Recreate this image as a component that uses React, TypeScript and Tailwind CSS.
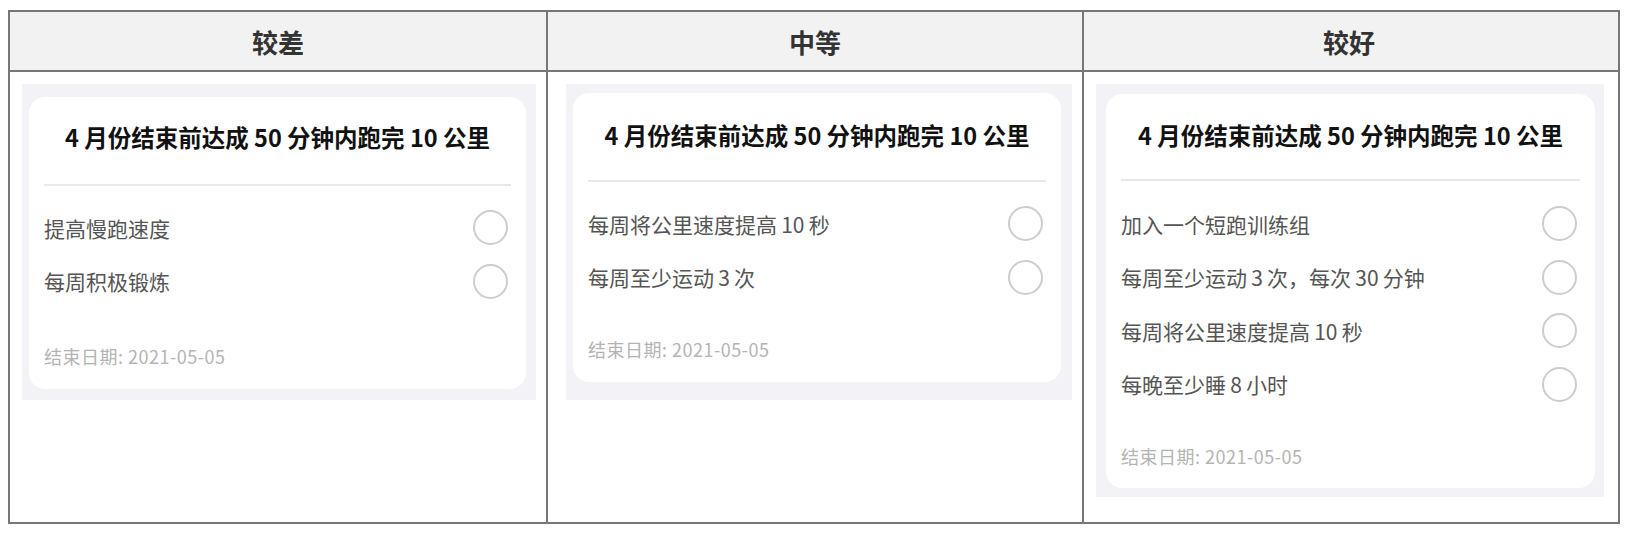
import React from "react";

type Col = {
  header: string;
  items: string[];
  cellPl: string;
  panelW: string;
  panelPad: string;
  cardW: string;
  titleBlock: string;
  afterDivider: string;
  dateGap: string;
  cardPb: string;
};

const FONT = { fontFamily: '"Noto Sans CJK SC", "Noto Sans", sans-serif' };

const TITLE = "4 月份结束前达成 50 分钟内跑完 10 公里";

const cols: Col[] = [
  {
    header: "较差",
    items: ["提高慢跑速度", "每周积极锻炼"],
    cellPl: "pl-[12px]",
    panelW: "w-[514px]",
    panelPad: "pt-[13px] pl-[7px] pr-[10px] pb-[11px]",
    cardW: "w-[497px]",
    titleBlock: "pt-[24px] pb-[31px]",
    afterDivider: "pt-[15px]",
    dateGap: "pt-[36px]",
    cardPb: "pb-[21px]",
  },
  {
    header: "中等",
    items: ["每周将公里速度提高\u200910\u2009秒", "每周至少运动\u20093\u2009次"],
    cellPl: "pl-[18px]",
    panelW: "w-[506px]",
    panelPad: "pt-[9px] pl-[7px] pr-[11px] pb-[18px]",
    cardW: "w-[488px]",
    titleBlock: "pt-[26px] pb-[29px]",
    afterDivider: "pt-[15px]",
    dateGap: "pt-[33px]",
    cardPb: "pb-[21px]",
  },
  {
    header: "较好",
    items: [
      "加入一个短跑训练组",
      "每周至少运动\u20093\u2009次，每次\u200930\u2009分钟",
      "每周将公里速度提高\u200910\u2009秒",
      "每晚至少睡\u20098\u2009小时",
    ],
    cellPl: "pl-[12px]",
    panelW: "w-[508px]",
    panelPad: "pt-[10px] pl-[10px] pr-[9px] pb-[9px]",
    cardW: "w-[489px]",
    titleBlock: "pt-[25px] pb-[28px]",
    afterDivider: "pt-[16px]",
    dateGap: "pt-[33px]",
    cardPb: "pb-[20px]",
  },
];

function Card({ c }: { c: Col }) {
  return (
    <div className={`${c.panelW} ${c.panelPad} bg-[#f2f2f7]`}>
      <div className={`${c.cardW} ${c.cardPb} bg-white rounded-[16px] px-[15px]`}>
        <div className={`${c.titleBlock} text-center`}>
          <div className="text-[23.5px] leading-[32px] font-bold text-[#111] whitespace-nowrap">
            {TITLE}
          </div>
        </div>
        <div className="h-[2px] bg-[#e8e8e8]" />
        <div className={c.afterDivider}>
          {c.items.map((it) => (
            <div key={it} className="h-[53.5px] flex items-center justify-between pr-[3px]">
              <span className="text-[21px] leading-[28px] text-[#555] whitespace-nowrap">{it}</span>
              <div className="w-[35px] h-[35px] rounded-full border-2 border-[#cdcdcd]" />
            </div>
          ))}
        </div>
        <div className={c.dateGap}>
          <div className="text-[18px] leading-[24px] tracking-[0.5px] text-[#b4b4b4]">
            结束日期: 2021-05-05
          </div>
        </div>
      </div>
    </div>
  );
}

export default function App() {
  return (
    <div className="w-[1630px] h-[536px] bg-white pt-[10px] pl-[8px]" style={FONT}>
      <div className="w-[1612px] h-[514px] border-2 border-[#777] flex flex-col">
        <div className="flex h-[60px] bg-[#f2f2f2] border-b-2 border-[#777]">
          {cols.map((c, i) => (
            <div
              key={c.header}
              className={`${i === 2 ? "w-[532px]" : "w-[536px]"} ${
                i > 0 ? "border-l-2 border-[#777]" : ""
              } flex items-center justify-center text-[26px] font-bold text-[#333]`}
            >
              {c.header}
            </div>
          ))}
        </div>
        <div className="flex flex-1">
          {cols.map((c, i) => (
            <div
              key={c.header}
              className={`${i === 2 ? "w-[532px]" : "w-[536px]"} ${
                i > 0 ? "border-l-2 border-[#777]" : ""
              } ${c.cellPl} pt-[12px]`}
            >
              <Card c={c} />
            </div>
          ))}
        </div>
      </div>
    </div>
  );
}
